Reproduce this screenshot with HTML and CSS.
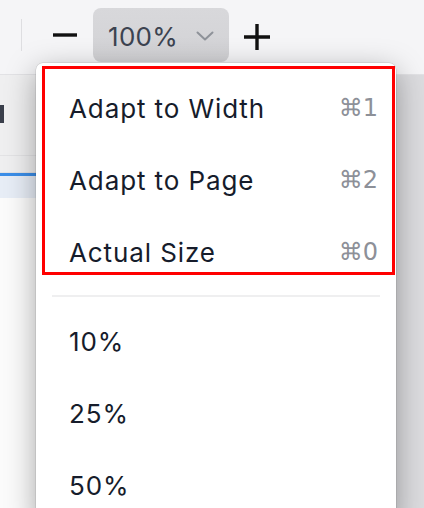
FILE: index.html
```html
<!DOCTYPE html>
<html lang="en">
<head>
    <meta charset="UTF-8">
    <meta name="viewport" content="width=device-width, initial-scale=1.0">
    <title>Zoom Menu</title>
    <link rel="stylesheet" href="styles.css">
</head>
<body>

    <header class="toolbar">
        <span class="toolbar-sep"></span>
        <button class="icon-btn zoom-out" title="Zoom out">
            <svg width="24" height="24" viewBox="0 0 24 24"><path d="M0 12h24" stroke="#111" stroke-width="3.4"/></svg>
        </button>
        <button class="zoom-select">
            <span class="zoom-value">100%</span>
            <svg class="chevron" width="18" height="10" viewBox="0 0 18 10"><path d="M1.5 1.5l7.5 7 7.5-7" fill="none" stroke="#8e9299" stroke-width="2" stroke-linecap="round" stroke-linejoin="round"/></svg>
        </button>
        <button class="icon-btn zoom-in" title="Zoom in">
            <svg width="26" height="26" viewBox="0 0 26 26"><path d="M0 13h26M13 0v26" stroke="#111" stroke-width="3.4"/></svg>
        </button>
    </header>

    <div class="workspace">
        <aside class="sidebar">
            <div class="side-row"><span class="side-mark"></span></div>
            <div class="side-row side-row-small"></div>
            <div class="side-row side-active"></div>
        </aside>
        <main class="canvas"></main>
    </div>

    <!-- Zoom dropdown -->
    <div class="menu">
        <div class="menu-item"><span>Adapt to Width</span><span class="shortcut">⌘1</span></div>
        <div class="menu-item"><span>Adapt to Page</span><span class="shortcut">⌘2</span></div>
        <div class="menu-item"><span>Actual Size</span><span class="shortcut">⌘0</span></div>
        <div class="menu-sep"></div>
        <div class="menu-item"><span>10%</span></div>
        <div class="menu-item"><span>25%</span></div>
        <div class="menu-item"><span>50%</span></div>
        <div class="highlight"></div>
    </div>

</body>
</html>
```

FILE: styles.css
```css
body {
    margin: 0;
    padding: 0;
    height: 508px;
    overflow: hidden;
    font-family: Inter, "Noto Sans", "DejaVu Sans", sans-serif;
    background-color: #f5f5f7;
}

.toolbar {
    display: flex;
    align-items: center;
    height: 70px;
    padding: 0 0 4px 21px;
    background-color: #f5f5f7;
    border-bottom: 1px solid #e2e2e5;
}

.toolbar-sep {
    width: 1px;
    height: 32px;
    background-color: #dedee1;
    margin-right: 31px;
}

.icon-btn {
    display: flex;
    align-items: center;
    background: none;
    border: none;
    padding: 0;
}

.zoom-out {
    margin-right: 16px;
}

.zoom-in {
    margin-left: 15px;
    margin-top: 3px;
}

.zoom-select {
    display: flex;
    align-items: center;
    width: 136px;
    height: 54px;
    padding: 0 0 0 15px;
    border: none;
    border-radius: 8px;
    background: linear-gradient(#d8d8db, #d2d2d5);
    font-family: inherit;
}

.zoom-value {
    font-size: 26px;
    color: #3c4350;
    letter-spacing: 0.3px;
    margin-top: 2px;
}

.chevron {
    margin-left: 18px;
    margin-top: 2px;
}

.workspace {
    display: flex;
    height: 433px;
}

.sidebar {
    width: 220px;
    background-color: #fbfbfb;
}

.side-row {
    height: 80px;
    background-color: #efeff0;
    border-bottom: 1px solid #e3e3e5;
    display: flex;
    align-items: center;
}

.side-mark {
    width: 4px;
    height: 18px;
    margin-top: -2px;
    background-color: #3a3f4b;
}

.side-row-small {
    height: 16px;
}

.side-active {
    height: 22px;
    background-color: #e7edf6;
    border-top: 3px solid #3b8ee8;
    border-bottom: none;
}

.canvas {
    flex: 1;
    background-color: #dcdcdf;
}

.menu {
    position: absolute;
    top: 63px;
    left: 36px;
    width: 360px;
    height: 460px;
    padding-top: 8px;
    box-sizing: border-box;
    background-color: #fff;
    border-radius: 7px;
    box-shadow: 0 0 0 0.5px rgba(0, 0, 0, 0.14), 0 8px 30px rgba(0, 0, 0, 0.34);
}

.menu-item {
    display: flex;
    align-items: center;
    justify-content: space-between;
    height: 72px;
    padding: 0 18px 0 33px;
    font-size: 26px;
    letter-spacing: 0.9px;
    color: #161c2b;
}

.menu-item span {
    margin-top: 2px;
}

.shortcut {
    color: #8d9098;
    font-family: "DejaVu Sans", sans-serif;
    font-size: 24px;
    letter-spacing: 0;
}

.menu-sep {
    height: 2px;
    margin: 8px 16px 7px 16px;
    background-color: #efeff0;
}

.highlight {
    position: absolute;
    top: 3px;
    left: 6px;
    width: 347px;
    height: 203px;
    border: 3px solid #ff0000;
}
```
